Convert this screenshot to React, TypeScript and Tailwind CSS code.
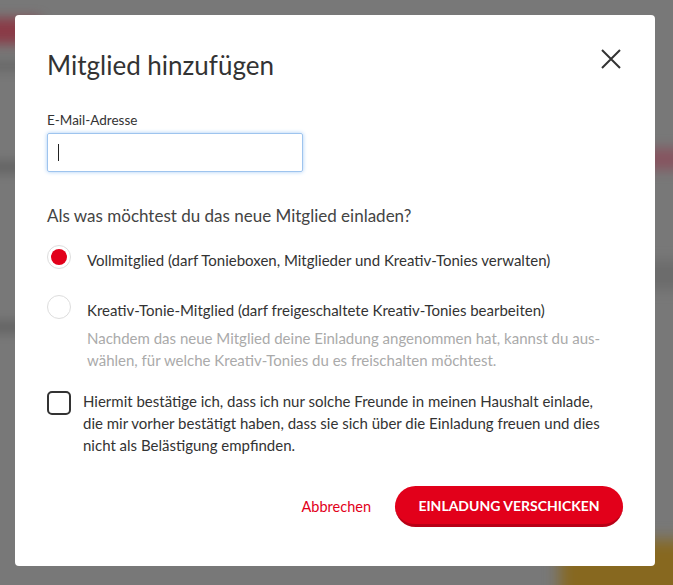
import React from "react";

export default function App() {
  return (
    <div className="relative w-[673px] h-[585px] overflow-hidden bg-[#787878]" style={{ fontFamily: "Lato, 'Open Sans', sans-serif" }}>
      {/* blurred background content */}
      <div className="absolute left-[-20px] top-[18px] w-[60px] h-[26px] bg-[#8a3b47] blur-[6px]" />
      <div className="absolute left-[-20px] top-[60px] w-[60px] h-[12px] bg-[#6a6a6a] blur-[5px]" />
      <div className="absolute left-[-20px] top-[160px] w-[60px] h-[14px] bg-[#666] blur-[5px]" />
      <div className="absolute left-[-20px] top-[320px] w-[60px] h-[14px] bg-[#666] blur-[5px]" />
      <div className="absolute left-[640px] top-[148px] w-[60px] h-[22px] bg-[#865560] blur-[6px]" />
      <div className="absolute left-[640px] top-[260px] w-[60px] h-[30px] bg-[#6c6c6c] blur-[6px]" />
      <div className="absolute left-[560px] top-[540px] w-[140px] h-[70px] bg-[#87681f] blur-[8px]" />

      <div className="absolute left-[15px] top-[15px] w-[640px] h-[551px] bg-white rounded-[4px] px-[32px] pt-[35px] text-[#333]">
        <div className="flex items-start justify-between">
          <h1 className="text-[26px] leading-[30px] text-[#333]">Mitglied hinzufügen</h1>
          <svg width="20" height="20" viewBox="0 0 20 20" className="mt-[-1px] mr-[2px]">
            <path d="M1 1 L19 19 M19 1 L1 19" stroke="#333" strokeWidth="2" />
          </svg>
        </div>

        <div className="mt-[32px] text-[13.5px] leading-[16px]">E-Mail-Adresse</div>
        <div className="mt-[5px] w-[256px] h-[39px] border border-[#9ec4ee] shadow-[0_0_4px_#a9cdf5] rounded-[2px] flex items-center pl-[10px]">
          <div className="w-[1px] h-[17px] bg-[#222]" />
        </div>

        <div className="mt-[33px] text-[17px] leading-[22px] text-[#444]">Als was möchtest du das neue Mitglied einladen?</div>

        <div className="mt-[18px] flex items-start">
          <div className="w-[24px] h-[24px] rounded-full border border-[#ddd] flex items-center justify-center shrink-0">
            <div className="w-[16px] h-[16px] rounded-full bg-[#e2001a]" />
          </div>
          <div className="ml-[16px] text-[15px] leading-[22px] pt-[4px]">Vollmitglied (darf Tonieboxen, Mitglieder und Kreativ-Tonies verwalten)</div>
        </div>

        <div className="mt-[24px] flex items-start">
          <div className="w-[24px] h-[24px] rounded-full border border-[#ddd] shrink-0" />
          <div className="ml-[16px] pt-[4px]">
            <div className="text-[15px] leading-[22px]">Kreativ-Tonie-Mitglied (darf freigeschaltete Kreativ-Tonies bearbeiten)</div>
            <div className="text-[15px] leading-[22px] text-[#aaa] mt-[6px] w-[540px]">
              Nachdem das neue Mitglied deine Einladung angenommen hat, kannst du aus-<br />wählen, für welche Kreativ-Tonies du es freischalten möchtest.
            </div>
          </div>
        </div>

        <div className="mt-[20px] flex items-start">
          <div className="w-[24px] h-[24px] rounded-[5px] border-2 border-[#333] shrink-0" />
          <div className="ml-[12px] text-[15px] leading-[22px] mt-[-1px]">
            Hiermit bestätige ich, dass ich nur solche Freunde in meinen Haushalt einlade,<br />die mir vorher bestätigt haben, dass sie sich über die Einladung freuen und dies<br />nicht als Belästigung empfinden.
          </div>
        </div>

        <div className="mt-[30px] flex items-center justify-end">
          <button className="text-[14.5px] text-[#e2001a] mr-[24px]">Abbrechen</button>
          <button className="w-[228px] h-[41px] rounded-full bg-[#e2001a] border-b-[3px] border-[#b80016] text-white font-bold text-[14px]">
            EINLADUNG VERSCHICKEN
          </button>
        </div>
      </div>
    </div>
  );
}
